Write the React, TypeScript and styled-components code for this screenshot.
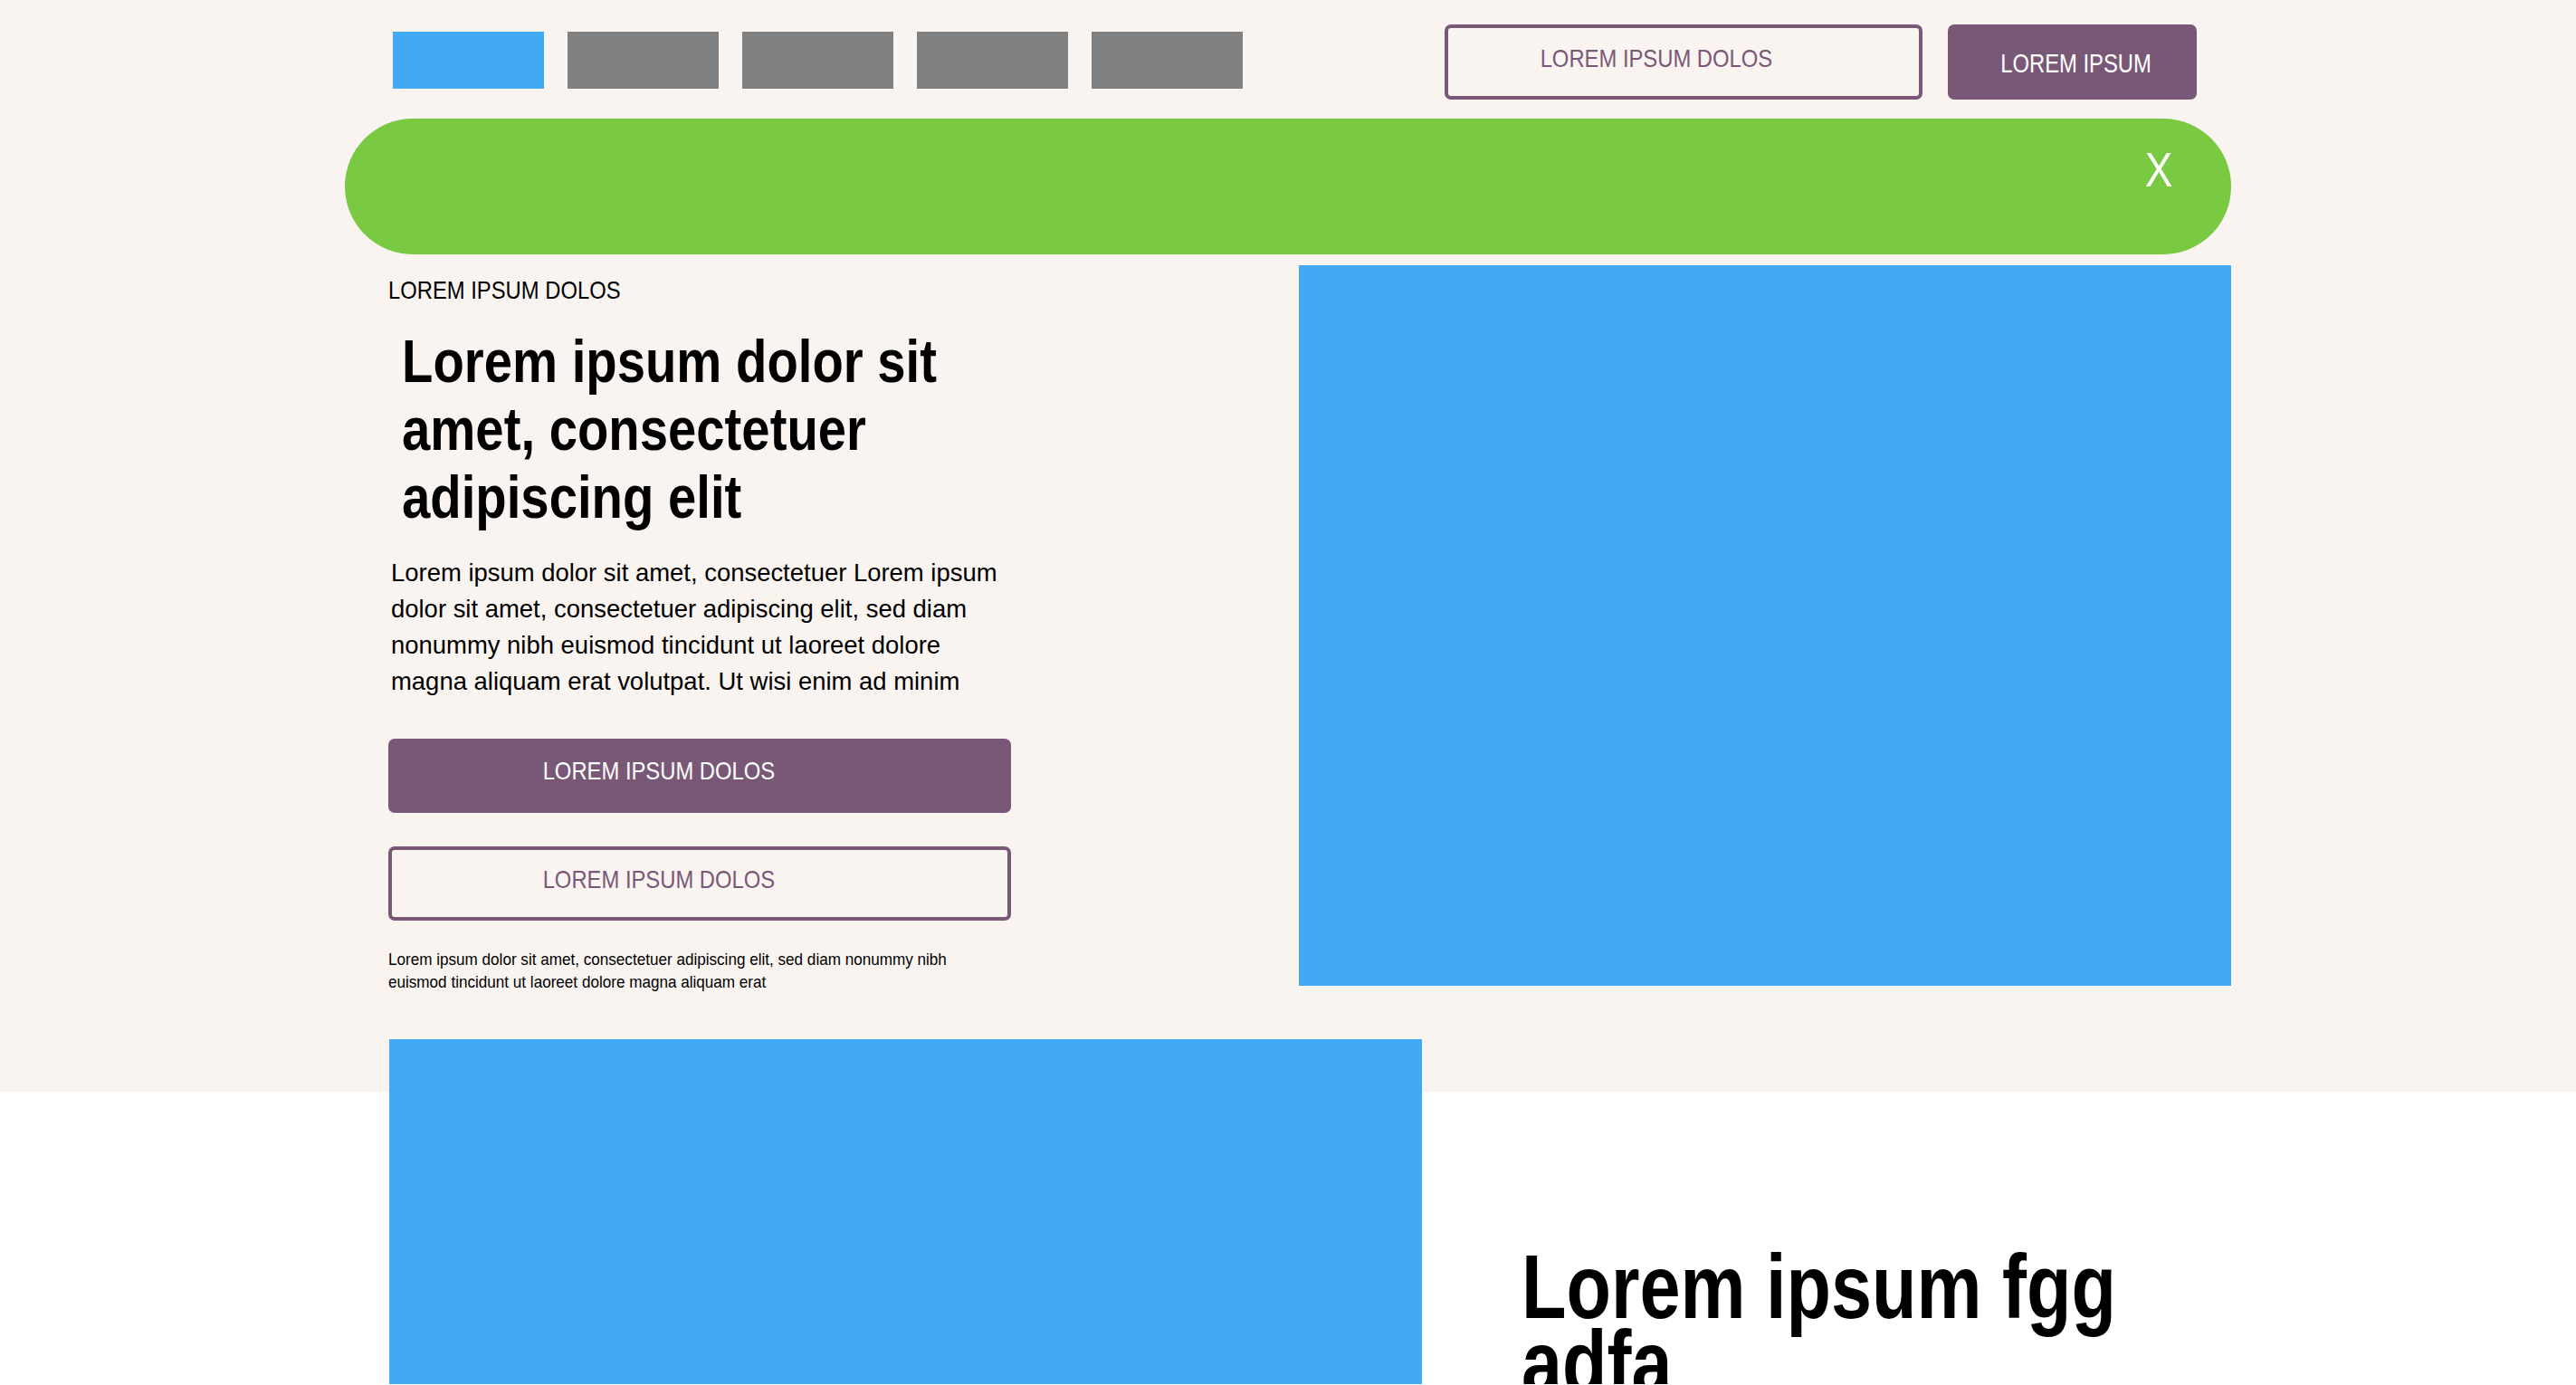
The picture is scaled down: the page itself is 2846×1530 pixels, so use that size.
import React from "react";
import styled, { createGlobalStyle } from "styled-components";

const CREAM = "#F9F4F0";
const BLUE = "#42A9F5";
const GREY = "#808080";
const PURPLE = "#795877";
const GREEN = "#7AC943";

const GlobalStyle = createGlobalStyle`
  html, body {
    margin: 0;
    padding: 0;
    background: #ffffff;
  }
  body {
    font-family: "Liberation Sans", Arial, sans-serif;
    color: #000;
  }
  * { box-sizing: border-box; }
`;

/* Condensed lettering: the reference uses a narrow grotesque; no narrow face is installed,
   so the regular face is squeezed horizontally. */
const Squeeze = styled.span<{ $sx: number; $origin?: "left" | "center" }>`
  display: inline-block;
  white-space: nowrap;
  transform: scaleX(${(p) => p.$sx});
  transform-origin: ${(p) => p.$origin ?? "left"} center;
`;

const Hero = styled.section`
  background: ${CREAM};
  padding: 27px 0 51px;
`;

const Container = styled.div`
  width: 2084px;
  margin: 0 auto;
`;

const TopBar = styled.header`
  display: flex;
  align-items: center;
  justify-content: space-between;
  height: 83px;
  padding: 0 38px 0 53px;
`;

const NavTabs = styled.nav`
  display: flex;
  gap: 26px;
  margin-top: -4px;
`;

const NavTab = styled.div<{ $active?: boolean }>`
  width: 167px;
  height: 63px;
  background: ${(p) => (p.$active ? BLUE : GREY)};
`;

const Actions = styled.div`
  display: flex;
  gap: 28px;
`;

const Button = styled.button<{
  $variant: "filled" | "outline";
  $w: number;
  $h: number;
  $fs?: number;
  $shiftX?: number;
  $shiftY?: number;
}>`
  display: flex;
  align-items: center;
  justify-content: center;
  width: ${(p) => p.$w}px;
  height: ${(p) => p.$h}px;
  margin: 0;
  border-radius: 7px;
  border: ${(p) => (p.$variant === "outline" ? `4px solid ${PURPLE}` : "none")};
  background: ${(p) => (p.$variant === "outline" ? "transparent" : PURPLE)};
  color: ${(p) => (p.$variant === "outline" ? PURPLE : "#ffffff")};
  font-family: inherit;
  font-size: ${(p) => p.$fs ?? 28}px;
  font-weight: 400;
  line-height: 1;
  padding: ${(p) => {
    const sx = p.$shiftX ?? 0;
    const sy = p.$shiftY ?? 0;
    const top = sy > 0 ? sy * 2 : 0;
    const bottom = sy < 0 ? -sy * 2 : 0;
    const left = sx > 0 ? sx * 2 : 0;
    const right = sx < 0 ? -sx * 2 : 0;
    return `${top}px ${right}px ${bottom}px ${left}px`;
  }};
  cursor: pointer;
`;

const Banner = styled.div`
  margin-top: 21px;
  height: 150px;
  border-radius: 75px;
  background: ${GREEN};
  display: flex;
  justify-content: flex-end;
  align-items: flex-start;
  padding: 29px 62px 0 0;
`;

const Close = styled.span`
  color: #ffffff;
  font-size: 54px;
  line-height: 54px;
  font-weight: 400;
`;

const HeroBody = styled.div`
  margin-top: 12px;
  display: flex;
  justify-content: space-between;
  align-items: flex-start;
`;

const LeftCol = styled.div`
  width: 688px;
  margin-left: 48px;
  padding-top: 12px;
  display: flex;
  flex-direction: column;
`;

const Eyebrow = styled.div`
  font-size: 28px;
  line-height: 32px;
  height: 32px;
`;

const Headline = styled.h1`
  margin: 24px 0 0;
  padding-left: 15px;
  font-size: 67px;
  line-height: 75px;
  font-weight: 700;
`;

const Lead = styled.p`
  margin: 27px 0 0;
  padding-left: 3px;
  font-size: 28px;
  line-height: 40px;
`;

const ButtonStack = styled.div`
  margin-top: 43px;
  display: flex;
  flex-direction: column;
  gap: 37px;
`;

const Fine = styled.p`
  margin: 30px 0 0;
  font-size: 19px;
  line-height: 25px;
`;

const MediaBlock = styled.div<{ $w: number; $h: number }>`
  width: ${(p) => p.$w}px;
  height: ${(p) => p.$h}px;
  background: ${BLUE};
  flex-shrink: 0;
`;

const Feature = styled.section`
  height: 381px;
  overflow: hidden;
  background: linear-gradient(to bottom, ${CREAM} 0, ${CREAM} 58px, #ffffff 58px);
`;

const FeatureRow = styled.div`
  display: flex;
  align-items: flex-start;
  padding-left: 49px;
`;

const FeatureText = styled.div`
  margin-left: 110px;
  padding-top: 231px;
  width: 760px;
`;

const FeatureTitle = styled.h2`
  margin: 0;
  font-size: 100px;
  line-height: 84px;
  font-weight: 700;
`;

export default function App() {
  return (
    <>
      <GlobalStyle />
      <Hero>
        <Container>
          <TopBar>
            <NavTabs>
              <NavTab $active />
              <NavTab />
              <NavTab />
              <NavTab />
              <NavTab />
            </NavTabs>
            <Actions>
              <Button $variant="outline" $w={528} $h={83} $shiftX={-30} $shiftY={-4}>
                <Squeeze $sx={0.85} $origin="center">LOREM IPSUM DOLOS</Squeeze>
              </Button>
              <Button $variant="filled" $w={275} $h={83} $fs={29} $shiftX={4} $shiftY={2}>
                <Squeeze $sx={0.82} $origin="center">LOREM IPSUM</Squeeze>
              </Button>
            </Actions>
          </TopBar>
          <Banner>
            <Close>
              <Squeeze $sx={0.85} $origin="center">X</Squeeze>
            </Close>
          </Banner>
          <HeroBody>
            <LeftCol>
              <Eyebrow>
                <Squeeze $sx={0.85}>LOREM IPSUM DOLOS</Squeeze>
              </Eyebrow>
              <Headline>
                <Squeeze $sx={0.84}>
                  Lorem ipsum dolor sit
                  <br />
                  amet, consectetuer
                  <br />
                  adipiscing elit
                </Squeeze>
              </Headline>
              <Lead>
                <Squeeze $sx={0.98}>
                  Lorem ipsum dolor sit amet, consectetuer Lorem ipsum
                  <br />
                  dolor sit amet, consectetuer adipiscing elit, sed diam
                  <br />
                  nonummy nibh euismod tincidunt ut laoreet dolore
                  <br />
                  magna aliquam erat volutpat. Ut wisi enim ad minim
                </Squeeze>
              </Lead>
              <ButtonStack>
                <Button $variant="filled" $w={688} $h={82} $shiftX={-45} $shiftY={-5}>
                  <Squeeze $sx={0.85} $origin="center">LOREM IPSUM DOLOS</Squeeze>
                </Button>
                <Button $variant="outline" $w={688} $h={82} $shiftX={-45} $shiftY={-4}>
                  <Squeeze $sx={0.85} $origin="center">LOREM IPSUM DOLOS</Squeeze>
                </Button>
              </ButtonStack>
              <Fine>
                <Squeeze $sx={0.9}>
                  Lorem ipsum dolor sit amet, consectetuer adipiscing elit, sed diam nonummy nibh
                  <br />
                  euismod tincidunt ut laoreet dolore magna aliquam erat
                </Squeeze>
              </Fine>
            </LeftCol>
            <MediaBlock $w={1030} $h={796} />
          </HeroBody>
        </Container>
      </Hero>
      <Feature>
        <Container>
          <FeatureRow>
            <MediaBlock $w={1141} $h={600} />
            <FeatureText>
              <FeatureTitle>
                <Squeeze $sx={0.81}>
                  Lorem ipsum fgg
                  <br />
                  adfa
                </Squeeze>
              </FeatureTitle>
            </FeatureText>
          </FeatureRow>
        </Container>
      </Feature>
    </>
  );
}
